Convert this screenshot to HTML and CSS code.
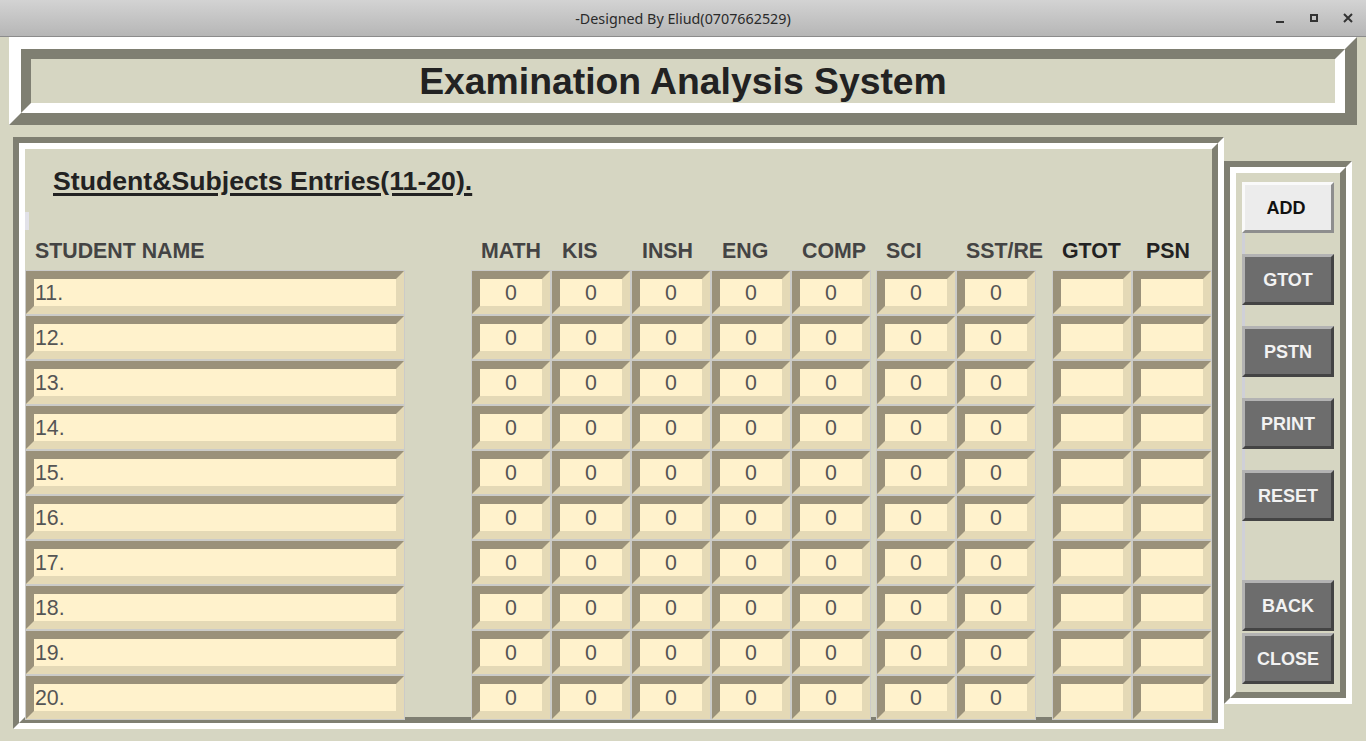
FILE: index.html
```html
<!DOCTYPE html>
<html lang="en">
<head>
<meta charset="utf-8">
<title>Examination Analysis System</title>
<link rel="stylesheet" href="styles.css">
</head>
<body>
<div class="titlebar">
  <div class="title">-Designed By Eliud(0707662529)</div>
  <div class="wm">
    <svg viewBox="0 0 16 16"><rect x="4" y="11" width="8" height="2" fill="#333"/></svg>
    <svg viewBox="0 0 16 16"><rect x="5" y="5" width="6" height="6" fill="none" stroke="#333" stroke-width="2"/></svg>
    <svg viewBox="0 0 16 16"><path d="M4 4 L12 12 M12 4 L4 12" stroke="#333" stroke-width="2" fill="none"/></svg>
  </div>
</div>

<div class="header"><div class="header-inner"><h1>Examination Analysis System</h1></div></div>

<div class="body-row">
  <div class="main">
    <div class="main-inner">
      <h2 class="subhead">Student&amp;Subjects Entries(11-20).</h2>
      <div class="mark"></div>
      <div class="grid heads">
        <div class="h">STUDENT NAME</div>
        <div class="h">MATH</div>
        <div class="h h-kis">KIS</div>
        <div class="h h-kis">INSH</div>
        <div class="h h-kis">ENG</div>
        <div class="h h-kis">COMP</div>
        <div class="h">SCI</div>
        <div class="h">SST/RE</div>
        <div class="h dark">GTOT</div>
        <div class="h dark h-psn">PSN</div>
      </div>
      <div class="grid rows">
        <div class="f name">11.</div><div class="f">0</div><div class="f">0</div><div class="f">0</div><div class="f">0</div><div class="f">0</div><div class="f">0</div><div class="f">0</div><div class="f"></div><div class="f"></div>
        <div class="f name">12.</div><div class="f">0</div><div class="f">0</div><div class="f">0</div><div class="f">0</div><div class="f">0</div><div class="f">0</div><div class="f">0</div><div class="f"></div><div class="f"></div>
        <div class="f name">13.</div><div class="f">0</div><div class="f">0</div><div class="f">0</div><div class="f">0</div><div class="f">0</div><div class="f">0</div><div class="f">0</div><div class="f"></div><div class="f"></div>
        <div class="f name">14.</div><div class="f">0</div><div class="f">0</div><div class="f">0</div><div class="f">0</div><div class="f">0</div><div class="f">0</div><div class="f">0</div><div class="f"></div><div class="f"></div>
        <div class="f name">15.</div><div class="f">0</div><div class="f">0</div><div class="f">0</div><div class="f">0</div><div class="f">0</div><div class="f">0</div><div class="f">0</div><div class="f"></div><div class="f"></div>
        <div class="f name">16.</div><div class="f">0</div><div class="f">0</div><div class="f">0</div><div class="f">0</div><div class="f">0</div><div class="f">0</div><div class="f">0</div><div class="f"></div><div class="f"></div>
        <div class="f name">17.</div><div class="f">0</div><div class="f">0</div><div class="f">0</div><div class="f">0</div><div class="f">0</div><div class="f">0</div><div class="f">0</div><div class="f"></div><div class="f"></div>
        <div class="f name">18.</div><div class="f">0</div><div class="f">0</div><div class="f">0</div><div class="f">0</div><div class="f">0</div><div class="f">0</div><div class="f">0</div><div class="f"></div><div class="f"></div>
        <div class="f name">19.</div><div class="f">0</div><div class="f">0</div><div class="f">0</div><div class="f">0</div><div class="f">0</div><div class="f">0</div><div class="f">0</div><div class="f"></div><div class="f"></div>
        <div class="f name">20.</div><div class="f">0</div><div class="f">0</div><div class="f">0</div><div class="f">0</div><div class="f">0</div><div class="f">0</div><div class="f">0</div><div class="f"></div><div class="f"></div>
      </div>
    </div>
  </div>

  <div class="side">
    <div class="side-inner">
      <div class="stack">
        <div class="btn light">ADD</div>
        <div class="btn">GTOT</div>
        <div class="btn">PSTN</div>
        <div class="btn">PRINT</div>
        <div class="btn">RESET</div>
      </div>
      <div class="btn">BACK</div>
      <div class="btn close">CLOSE</div>
    </div>
  </div>
</div>
</body>
</html>
```

FILE: styles.css
```css
* { box-sizing: border-box; }
html, body { margin: 0; padding: 0; }
body {
  width: 1366px;
  height: 741px;
  overflow: hidden;
  background: #d6d6c2;
  font-family: "Liberation Sans", Arial, sans-serif;
}

/* window title bar */
.titlebar {
  height: 37px;
  border-bottom: 1px solid #8c8c8c;
  background: linear-gradient(#d3d3d3, #b6b6b6);
  display: grid;
  grid-template-columns: 1fr auto 1fr;
  align-items: center;
  font-family: "Noto Sans", "DejaVu Sans", sans-serif;
  font-size: 14.3px;
  color: #2a2a2a;
}
.titlebar .title { grid-column: 2; }
.wm {
  grid-column: 3;
  justify-self: end;
  display: flex;
  gap: 18px;
  padding-right: 10px;
}
.wm svg { width: 16px; height: 16px; display: block; }

/* header frame (ridge) */
.header {
  margin-left: 9px;
  width: 1348px;
  height: 88px;
  border: 12px solid;
  border-color: #ffffff #7f7f72 #7f7f72 #ffffff;
}
.header-inner {
  height: 100%;
  border: 10px solid;
  border-color: #7f7f72 #ffffff #ffffff #7f7f72;
  display: flex;
  align-items: center;
  justify-content: center;
}
.header h1 {
  margin: 0;
  padding-top: 1px;
  font-size: 28pt;
  font-weight: bold;
  line-height: 1;
  color: #222222;
}

.body-row {
  display: flex;
  align-items: flex-start;
  margin-top: 12px;
  padding-left: 13px;
}

/* groove frames */
.main, .side {
  border: 6px solid;
  border-color: #7f7f72 #ffffff #ffffff #7f7f72;
}
.main-inner, .side-inner {
  height: 100%;
  border: 6px solid;
  border-color: #ffffff #7f7f72 #7f7f72 #ffffff;
}
.main { width: 1211px; height: 592px; }

.subhead {
  margin: 12px 0 0 28px;
  font-size: 20pt;
  font-weight: bold;
  line-height: 40px;
  color: #222222;
  text-decoration: underline;
  text-decoration-thickness: 3px;
  text-underline-offset: 3px;
}
.mark {
  margin-top: 11px;
  width: 4px;
  height: 18px;
  background: #e2e2e8;
}

.grid {
  display: grid;
  grid-template-columns: 446px 80px 80px 80px 80px 85px 80px 96px 80px 80px;
}
.heads {
  height: 40px;
  align-items: center;
}
.h {
  padding-left: 10px;
  padding-top: 2px;
  font-size: 16pt;
  font-weight: bold;
  color: #444444;
  line-height: 24px;
}
.h-kis { padding-left: 11px; }
.h-psn { padding-left: 14px; }
.h.dark { color: #222222; }

.rows { grid-auto-rows: 45px; }
.f {
  margin: 1px;
  width: 78px;
  height: 43px;
  border: 8px solid;
  border-color: #9a917a #e4d9b6 #e4d9b6 #9a917a;
  background: #fff2cc;
  box-shadow: 0 0 0 1px #cbcbc8;
  padding-top: 1px;
  font-size: 16pt;
  line-height: 26px;
  color: #555555;
  text-align: center;
}
.f.name {
  width: 378px;
  text-align: left;
  padding-left: 1px;
}

/* side buttons */
.side {
  margin-top: 24px;
  width: 128px;
  height: 543px;
}
.side-inner { padding: 9px 6px 0 6px; }
.stack {
  display: flex;
  flex-direction: column;
  gap: 21px;
  padding-bottom: 59px;
  background: linear-gradient(90deg, #cfd0d8 0, #cfd0d8 3px, transparent 3px);
}
.btn {
  width: 92px;
  height: 51px;
  border: 3px solid;
  border-color: #b3b3b3 #444444 #444444 #b3b3b3;
  background: #6d6d6d;
  color: #f2f2f2;
  font-size: 18px;
  font-weight: bold;
  padding-top: 1px;
  display: flex;
  align-items: center;
  justify-content: center;
}
.btn.light {
  background: #ececec;
  border-color: #fafafa #8e8e8e #8e8e8e #fafafa;
  color: #111111;
  padding-right: 4px;
}
.btn.close { margin-top: 2px; }
```
